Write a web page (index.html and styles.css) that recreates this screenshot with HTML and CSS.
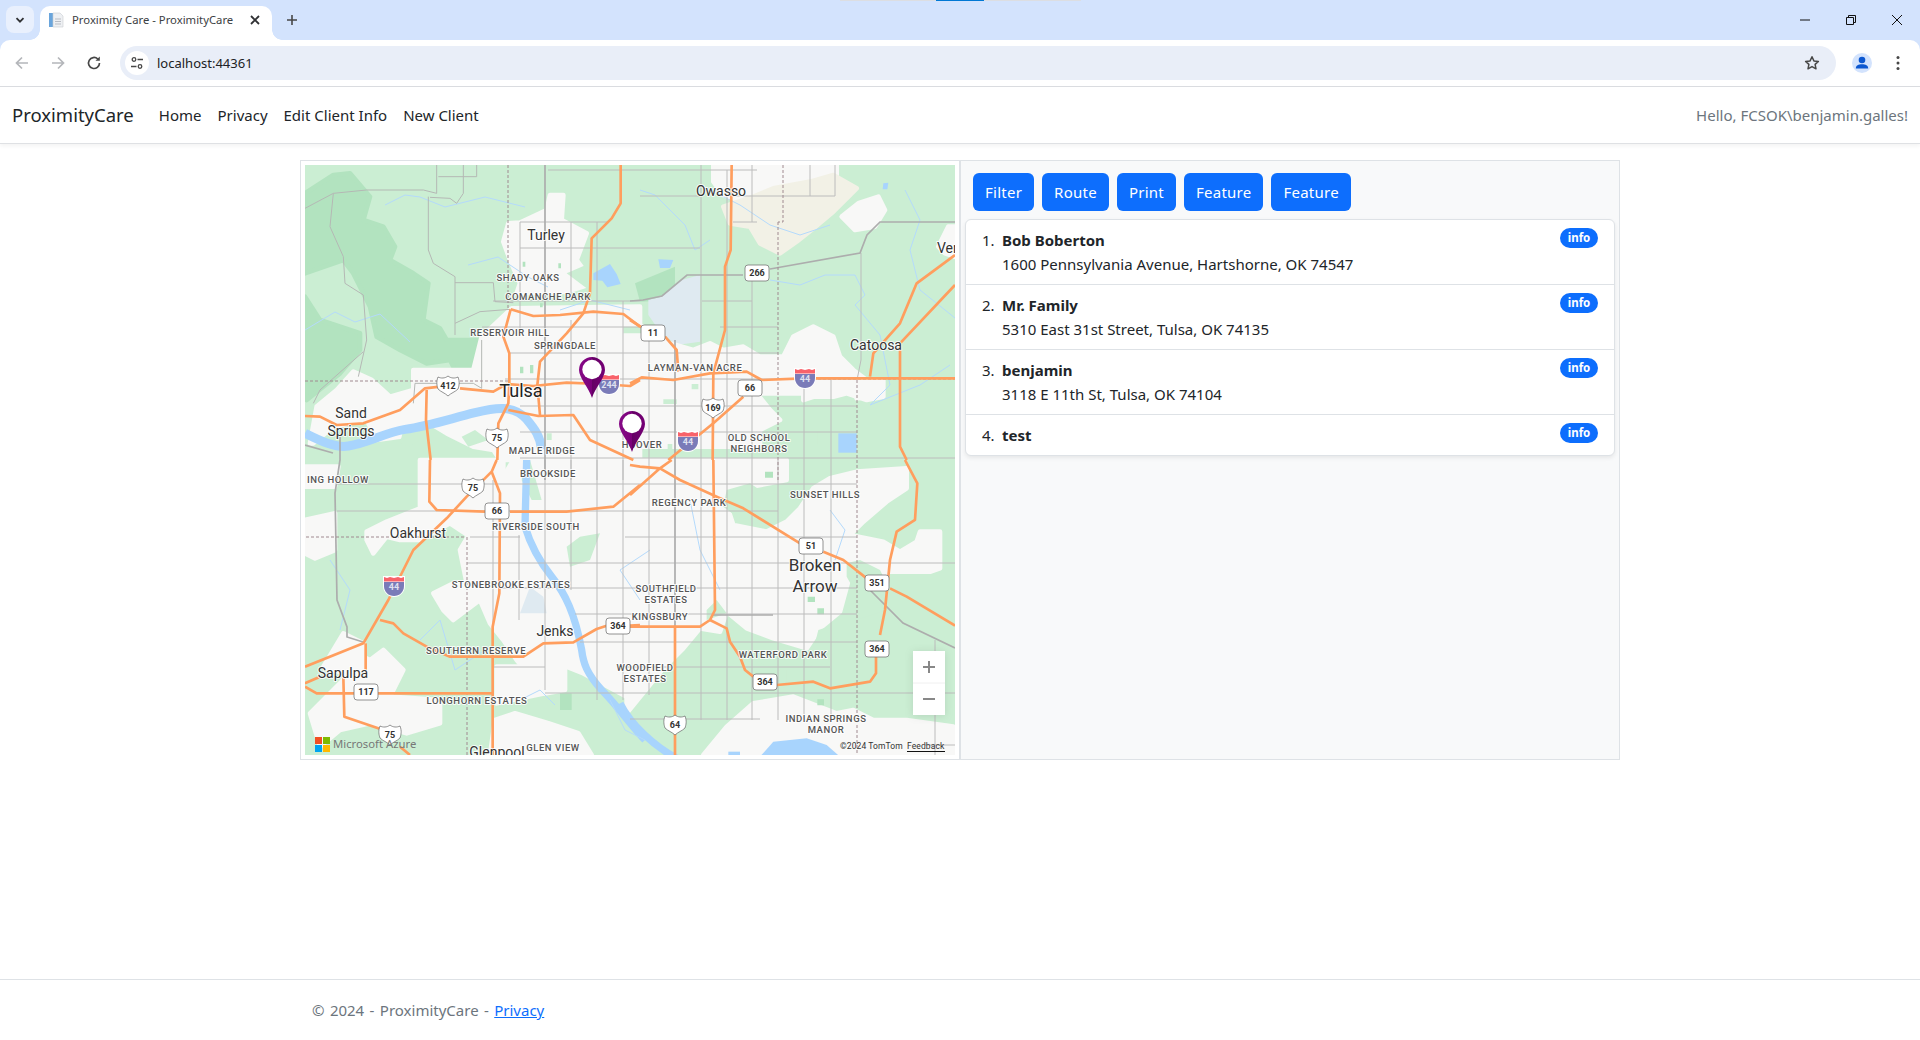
FILE: index.html
```html
<!DOCTYPE html>
<html lang="en">
<head>
<meta charset="utf-8">
<title>Proximity Care - ProximityCare</title>
<link rel="stylesheet" href="styles.css">
</head>
<body>
<header class="chrome">
  <div class="drag-hint"><span class="seg"></span><span class="seg seg-blue"></span><span class="seg seg-last"></span></div>
  <div class="tabstrip">
    <button class="tab-search"><svg width="12" height="12" viewBox="0 0 12 12"><path class="ic-s2" d="M2.5 4.2 6 7.7 9.5 4.2"/></svg></button>
    <div class="tab">
      <svg class="favicon" width="16" height="16" viewBox="0 0 16 16"><rect x="1" y="1" width="4" height="14" fill="#6aa5dc"/><path d="M5 1h7l3 3v11H5z" fill="#eef0f3" stroke="#c9ccd1" stroke-width=".6"/><path d="M7 7h6M7 9.500h6M7 12h6" stroke="#b9bdc4"/></svg>
      <span class="tab-title">Proximity Care - ProximityCare</span>
      <svg class="tab-close" width="10" height="10" viewBox="0 0 10 10"><path class="ic-s2" d="M1 1l8 8M9 1l-8 8"/></svg>
    </div>
    <svg class="newtab" width="12" height="12" viewBox="0 0 12 12"><path class="ic-s" d="M6 1v10M1 6h10"/></svg>
    <div class="winbtns">
      <svg width="12" height="12" viewBox="0 0 12 12"><path class="ic-w" d="M1 6h10"/></svg>
      <svg width="12" height="12" viewBox="0 0 12 12"><path class="ic-w" d="M1.500 3.500h7v7h-7zM3.500 3.500v-2h7v7h-2"/></svg>
      <svg width="12" height="12" viewBox="0 0 12 12"><path class="ic-w" d="M1 1l10 10M11 1L1 11"/></svg>
    </div>
  </div>
  <div class="toolbar">
    <svg class="tb-ic" width="16" height="16" viewBox="0 0 16 16"><path class="ic-dis" d="M14 8H2.500M8 2.500 2.500 8 8 13.500"/></svg>
    <svg class="tb-ic" width="16" height="16" viewBox="0 0 16 16"><path class="ic-dis" d="M2 8h11.500M8 2.500 13.500 8 8 13.500"/></svg>
    <svg class="tb-ic" width="16" height="16" viewBox="0 0 16 16"><path class="ic-rl" d="M13.500 8A5.500 5.500 0 1 1 11.800 4"/><path d="M13.800 1.500v4.300H9.500z" fill="#474747"/></svg>
    <div class="omnibox">
      <span class="site-ic"><svg width="14" height="14" viewBox="0 0 14 14"><circle cx="4" cy="3.500" r="1.800" class="ic-t"/><path class="ic-t" d="M7.500 3.500h5.500M1 10.500h5.500"/><circle cx="10" cy="10.500" r="1.800" class="ic-t"/></svg></span>
      <span class="url">localhost:44361</span>
      <svg class="star" width="16" height="16" viewBox="0 0 16 16"><path class="ic-star" d="M8 1.800l1.900 4.100 4.500.5-3.300 3 .9 4.400L8 11.600l-4 2.200.9-4.400-3.300-3 4.500-.5z"/></svg>
    </div>
    <span class="avatar"><svg width="20" height="20" viewBox="0 0 20 20"><circle cx="10" cy="7" r="3.300" fill="#0b57d0"/><path d="M3.800 15.500c0-3.200 2.600-4.300 6.200-4.300s6.200 1.100 6.200 4.300z" fill="#0b57d0"/></svg></span>
    <svg class="menu" width="16" height="16" viewBox="0 0 16 16"><circle cx="8" cy="2.500" r="1.500" fill="#474747"/><circle cx="8" cy="8" r="1.500" fill="#474747"/><circle cx="8" cy="13.500" r="1.500" fill="#474747"/></svg>
  </div>
</header>

<nav class="navbar">
  <a class="brand">ProximityCare</a>
  <ul class="navlinks">
    <li><a>Home</a></li>
    <li><a>Privacy</a></li>
    <li><a>Edit Client Info</a></li>
    <li><a>New Client</a></li>
  </ul>
  <span class="hello">Hello, FCSOK\benjamin.galles!</span>
</nav>

<main class="container">
  <section class="map-col">
    <svg class="map" width="650" height="590" viewBox="305 165 650 590">
      <rect x="305" y="165" width="650" height="590" class="green"/>
      <!-- fills: top-left -->
      <g transform="translate(300 160) scale(.33333)">
        <path class="forest soft" d="M15 100 100 45l50-5 60 70-20 70 60 20 35 60-15 40 70 40 45 30-15 110 50 25 20 35h100v70l-35 20-35 10-20-40-70 10-80-40-70-40-20-90-50-100-30-40-115 40z"/>
        <path class="forest soft" d="M15 410l45 70 120 40v50l-60 70-100 80z"/>
        <path class="urban soft" d="M625 190l35-2 80-38 10-45h40l-5 75 75 40-30 80 50 70-80 25-150 5 10-30-30-70-20-55z"/>
        <path class="urban soft" d="M545 530l90-85 385-5v460H600l-20-30-60-10-80-40-50-30h-60l-30 40-70 10-30-60-100 20-60 50H30l20-110 60-50 50-55 55 25 55 50 70-20v-60h180z"/>
        <path class="forest" d="M660 620h10v20h-10zM690 615h10v25h-10zM775 310h8v15h-8zM668 305h8v15h-8zM720 430h8v12h-8z"/>
        <path class="green" d="M310 810h40l10 30-30 20-30-10zM485 830l40-20 40 30-60 20zM740 820h15v20h-15z"/>
        <path class="green" d="M965 380l20-60 35 10v100H960zM800 340l70-30 70-30 30 40-90 80z"/>
        <path class="water" d="M880 340l50-28 20 30 12 30-40 10-15-20-27-2z"/>
        <path class="waterln thick" d="M15 820c40 20 90 45 130 38 60-10 110-40 170-50 70-10 130-30 210-50 60-15 115-25 155 20 25 30 40 50 45 90" />
      </g>
      <!-- fills: top-right -->
      <g transform="translate(630 160) scale(.33333)">
        <path class="urban soft" d="M250 15h370v70l-60 20-70 40-80 30-70 0v-50l-60-20-30-40z"/>
        <path class="sand soft" d="M370 110l60-25 110-20 70-20 70 40-30 30-40 40-60 50-50 40-50 35-60-30-30-50-60-10-20-50z"/>
        <path class="urban soft" d="M635 170l50-40 60-20 20 40-30 50-60 10z"/>
        <path class="urban soft" d="M925 260l30-60h20v90l-30-10z"/>
        <path class="forest" d="M15 370l120-50v100l-105 5z"/>
        <path class="lake" d="M55 420l40-10 60-50 55-15v200l-70 10-50-40-35-50z"/>
        <path class="urban soft" d="M-20 500h60l80 50 70 20 50-20 40 20 60-10 50 30h70l30-60 60-30 60 30 20 60 40 40 40 30h50l0 50-50 10-60-20-40 10-60 0-30 10v-20h-140l40 50 30 30-60 30 0 50-490 0z"/>
        <path class="urban soft" d="M680 665h60v40l-60 10z"/>
        <path class="green" d="M-20 500h55v20h-55zM100 718h40v14h-40zM185 672h20v16h-20z"/>
        <path class="waterfill" d="M625 820h55v58h-55z"/>
        <path class="green" d="M562 815h40v40h-40z"/>
        <path class="green" d="M113 852h14v24h-14z"/>
        <path class="water" d="M85 298l45 2-10 24H90zM760 70l15-2-3 20h-14z"/>
      </g>
      <!-- fills: bottom-left -->
      <g transform="translate(300 460) scale(.33333)">
        <path class="urban soft" d="M15 20h100l-10 60h-90zM15 180l90-20v110l-60 25-30-15z"/>
        <path class="urban soft" d="M200 215l60-30 100-40v-145h250v70l-30 70-70 90-60-40-90 50-60 0-40-10-40 50-20-40z"/>
        <path class="urban soft" d="M400 400l60-30 100-10-20 60-80 60-30-30z"/>
        <path class="urban soft" d="M640 0h380v660l-40 50-130-70-100-40-50 60-50-60-40-60-40-50-30-70-40-50-20-100z"/>
        <path class="green" d="M690 0h-15l-10 60 30 60 30 0zM800 260l40-30 60-10-30 80-60 20z"/>
        <path class="urban soft" d="M30 760l100-100 20-90 60 30 40-30 60 60-40 80 150 10 0 70-100 30-110-30-90 20-60 50zM130 520l60 30v50l-60 40-60-20z"/>
        <path class="urban soft" d="M590 620h145v80l-145 30zM585 780l60-20 100 30 90 30 40 65H570z"/>
        <path class="urban soft" d="M735 560l60 30 0 100-60 10z"/>
        <path class="lake" d="M660 460l30-80 40 30 10 50h-80z"/>
        <path class="forest" d="M780 700h35v50h-35z"/>
        <path class="waterln thick2" d="M680 0l-5 200c15 50 40 100 80 150 40 50 70 110 90 220 5 40 15 70 60 120 50 50 90 110 130 150"/>
      </g>
      <!-- fills: bottom-right -->
      <g transform="translate(630 460) scale(.33333)">
        <path class="urban soft" d="M-10 0h480v60l-130 25-50 50 20 60 100 20 60-30 40-40 40-60 50-30 80-20 150-10v60l-60 40-70 60-40 40 100 20 50 30 50-30 10-30h60v110l-30 10-120 0-90 40 30-60-60 30-30 110-60 50-40 60-100-30-80-30-60-50-20 60-60-10-50 60-60 60L-10 760z"/>
        <path class="urban soft" d="M290 800l80-70 120-20 130 50 50-10 60 30 100 0 140 20v85H220z"/>
        <path class="green" d="M290 90l70-20 60 40 40 60-60 30-40-20-40-10-40-30zM230 450l30-30 30 40-60 20zM565 510l30-10 30 40-40 40-30-30zM280 630l30-20 80 0 80 20 0 50-100 20-90-10zM650 310l40-10 60 30 30 60-10 60-90 30 10-60-40-70z"/>
        <path class="forest" d="M405 35h24v18h-24zM533 410h22v16h-22zM562 445h20v18h-20zM562 718h20v18h-20z"/>
        <path class="waterln thick2" d="M-30 730c30 60 100 130 180 170"/>
        <path class="water" d="M390 890l40-45 100-10 60 20 40 35z"/>
        <path class="water" d="M295 875h35v15h-35z"/>
      </g>
      <!-- thin rivers -->
      <g class="rivers">
        <path d="M305 330l30-18 20 10 25-8 30 28M468 265l30-8 30 20 20 10M560 310l30-10 40 10M385 205l20-10 15 2 25 10 40-10 40 10M640 190l15 5 30 30 10 25 15-10M700 185l40 20 30 20 30 10 30-10M770 280l30 5 25-10 30 0 10 20-10 10 25 30 10 50-20 20 50-20 30-20M905 190l15 30-10 30 10 40 50 40M610 700l15 30 20 10M640 600l-20-30 30-20M830 510l15 20-10 30M520 700l20-10 15 15M330 560l20 30-10 40M420 640l20-20 15 50 30-20M690 500l10 50 20 40"/>
      </g>
      <!-- roads -->
      <path class="grid" d="M548 170H757M640 196h60M733 196H835M520 222h87M733 222h24M520 248H700M493 301H640M702 301h50M482 327H640M720 327h58M510 353H778M505 379H857M520 406H857M520 432H857M520 458H955M337 484H857M337 511H778M470 537h50M625 537H857M467 563H955M500 588H857M575 614H857M580 642H857M493 667h52M625 667H830M545 693H955M630 719H760M925 745h30"/>
      <path class="grid" d="M520 222V335M571 222V301M571 320V480M597 222V480M623 301V480M649 340V695M701 165V720M727 170V720M752 165V222M752 275V720M804 385V720M831 380V720M493 480V700M519 535V620M545 460V690M571 460V590M597 460V700M623 460V700M778 460V720M935 640V755M835 165V196M810 165V196M861 253V360l-4 20"/>
      <g transform="translate(300 160) scale(.33333)">
        <path class="rural" d="M15 145l85-45 100-10h170l40 10V15M530 15v35H415M385 110v160l15 40 65 40v175M465 368h115l5 57 55 3M465 490l75-35 90-7M100 100l-10 100 40 90 5 80 55 35 10 135-25 110M40 730l20-40 130-115M340 730l5-60h175l25 15V540M390 112l60 3 20 15 20-30V15"/>
      </g>
      <path class="grid-thick" d="M545 165V340M545 340V480M675 340V645M630 301l13-1 19-4 25-21h56M770 269l90-16 7-18 13-13h75M870 590l33 33 52 25M340 437v23l-5 33 2 107 10 27v10l16 5M305 445l28 8M713 615h60"/>
      <path class="county" d="M508 165V310M305 381H508M783 165v57h-5M778 222V480M778 379H955M857 380V755M306 537h160M467 537V755"/>
      <g transform="translate(300 160) scale(.33333)">
        <g class="o"><path d="M962 15v115l-27 45-60 60-5 165-20 60-50 60-80 85-8 70 8 90"/><path d="M632 448l-22 82 18 50v90"/><path d="M632 448l68 20 80-3 100-10 90 7 50 38"/><path d="M15 768l45 2 50 25 80-5 110-40 75-65 45-5M480 685l100 10 40-23 80 6 100-10 100 4 90 6 30-18"/><path d="M380 690l-2 90 14 120"/><path d="M625 750l90 18 105-3 50 75 130 60"/><path d="M628 670l-3 60-30 60-3 110"/></g>
      </g>
      <g transform="translate(630 160) scale(.33333)">
        <g class="o"><path d="M305 15l-3 255-17 50v190l-35 130-2 260"/><path d="M0 670l35-18 95 8 110-20 110-5 45 25 125-5h460"/><path d="M0 480l40 25M105 530l35 40 5 65"/><path d="M250 790l90-80M115 900l135-110"/><path d="M975 285 860 370l-50 120-80 90-10 70"/><path d="M975 375 810 550v310l20 40"/></g>
      </g>
      <g transform="translate(300 460) scale(.33333)">
        <g class="o"><path d="M390 0l-2 125 22 25 145 5M630 155l170 0 140-15 80-65"/><path d="M590 0l-15 35-75 75-60 65-100 95-75 150-75 130-175 70"/><path d="M575 35l25 65-2 300-20 100v385"/><path d="M240 480l40 10 30 30 70 40 70 30h220l60-40 90-3 70-40 30-10M990 497l30-2"/><path d="M197 550v80"/><path d="M15 680l35 20h530"/><path d="M15 670l45-20"/><path d="M130 650l3 120 117 40M300 860l30 25"/></g>
      </g>
      <g transform="translate(630 460) scale(.33333)">
        <g class="o"><path d="M0 105l90-80 35-25M0 15l30 5 60 5 60 35 120 55 70 30 170 105M580 275l60 25 70 55M780 385l50 25 145 87"/><path d="M250 0l5 450-15 30-30 20H0"/><path d="M240 480l50 25 10 40 30 45 15 40 25 20"/><path d="M440 675l110-10 50 20 120-20 18-25v-50M750 525l15-75 15-150 20-85 55-35 7-110-37-70"/><path d="M135 497v388"/></g>
      </g>

      <!-- labels -->
      <g class="labels">
        <text class="city" x="546" y="240">Turley</text>
        <text class="city" x="721" y="196">Owasso</text>
        <text class="city" x="937" y="253" style="text-anchor:start">Ver</text>
        <text class="city" x="876" y="350">Catoosa</text>
        <text class="city" x="351" y="418">Sand</text>
        <text class="city" x="351" y="436">Springs</text>
        <text class="city big" x="521" y="397">Tulsa</text>
        <text class="city" x="418" y="538">Oakhurst</text>
        <text class="city" x="555" y="636">Jenks</text>
        <text class="city" x="343" y="678">Sapulpa</text>
        <text class="city" x="497" y="757">Glenpool</text>
        <text class="city bigger" x="815" y="571">Broken</text>
        <text class="city bigger" x="815" y="592">Arrow</text>
        <text class="hood" x="528" y="281">SHADY OAKS</text>
        <text class="hood" x="548" y="300">COMANCHE PARK</text>
        <text class="hood" x="510" y="336">RESERVOIR HILL</text>
        <text class="hood" x="565" y="349">SPRINGDALE</text>
        <text class="hood" x="695" y="371">LAYMAN-VAN ACRE</text>
        <text class="hood" x="542" y="454">MAPLE RIDGE</text>
        <text class="hood" x="548" y="477">BROOKSIDE</text>
        <text class="hood" x="642" y="448">HOOVER</text>
        <text class="hood" x="759" y="441">OLD SCHOOL</text>
        <text class="hood" x="759" y="452">NEIGHBORS</text>
        <text class="hood" x="338" y="483">ING HOLLOW</text>
        <text class="hood" x="536" y="530">RIVERSIDE SOUTH</text>
        <text class="hood" x="689" y="506">REGENCY PARK</text>
        <text class="hood" x="825" y="498">SUNSET HILLS</text>
        <text class="hood" x="511" y="588">STONEBROOKE ESTATES</text>
        <text class="hood" x="666" y="592">SOUTHFIELD</text>
        <text class="hood" x="666" y="603">ESTATES</text>
        <text class="hood" x="660" y="620">KINGSBURY</text>
        <text class="hood" x="476" y="654">SOUTHERN RESERVE</text>
        <text class="hood" x="783" y="658">WATERFORD PARK</text>
        <text class="hood" x="645" y="671">WOODFIELD</text>
        <text class="hood" x="645" y="682">ESTATES</text>
        <text class="hood" x="477" y="704">LONGHORN ESTATES</text>
        <text class="hood" x="826" y="722">INDIAN SPRINGS</text>
        <text class="hood" x="826" y="733">MANOR</text>
        <text class="hood" x="553" y="751">GLEN VIEW</text>
      </g>

      <!-- shields -->
      <g class="shields">
        <g transform="translate(448 386)"><path class="us" d="M-10-9c3 1.500 7 1.500 10-1 3 2.500 7 2.500 10 1 2 5 1 9 0 12-3 3-7 4-10 7-3-3-7-4-10-7-1-3-2-7 0-12z"/><text y="3">412</text></g>
        <g transform="translate(497 438)"><path class="us" d="M-10-9c3 1.500 7 1.500 10-1 3 2.500 7 2.500 10 1 2 5 1 9 0 12-3 3-7 4-10 7-3-3-7-4-10-7-1-3-2-7 0-12z"/><text y="3">75</text></g>
        <g transform="translate(473 488)"><path class="us" d="M-10-9c3 1.500 7 1.500 10-1 3 2.500 7 2.500 10 1 2 5 1 9 0 12-3 3-7 4-10 7-3-3-7-4-10-7-1-3-2-7 0-12z"/><text y="3">75</text></g>
        <g transform="translate(390 735)"><path class="us" d="M-10-9c3 1.500 7 1.500 10-1 3 2.500 7 2.500 10 1 2 5 1 9 0 12-3 3-7 4-10 7-3-3-7-4-10-7-1-3-2-7 0-12z"/><text y="3">75</text></g>
        <g transform="translate(713 408)"><path class="us" d="M-10-9c3 1.500 7 1.500 10-1 3 2.500 7 2.500 10 1 2 5 1 9 0 12-3 3-7 4-10 7-3-3-7-4-10-7-1-3-2-7 0-12z"/><text y="3">169</text></g>
        <g transform="translate(675 725)"><path class="us" d="M-10-9c3 1.500 7 1.500 10-1 3 2.500 7 2.500 10 1 2 5 1 9 0 12-3 3-7 4-10 7-3-3-7-4-10-7-1-3-2-7 0-12z"/><text y="3">64</text></g>
        <g transform="translate(757 273)"><rect class="st" x="-12" y="-8" width="24" height="16" rx="3"/><text y="3">266</text></g>
        <g transform="translate(653 333)"><rect class="st" x="-12" y="-8" width="24" height="16" rx="3"/><text y="3">11</text></g>
        <g transform="translate(750 388)"><rect class="st" x="-12" y="-8" width="24" height="16" rx="3"/><text y="3">66</text></g>
        <g transform="translate(497 511)"><rect class="st" x="-12" y="-8" width="24" height="16" rx="3"/><text y="3">66</text></g>
        <g transform="translate(618 626)"><rect class="st" x="-12" y="-8" width="24" height="16" rx="3"/><text y="3">364</text></g>
        <g transform="translate(765 682)"><rect class="st" x="-12" y="-8" width="24" height="16" rx="3"/><text y="3">364</text></g>
        <g transform="translate(877 649)"><rect class="st" x="-12" y="-8" width="24" height="16" rx="3"/><text y="3">364</text></g>
        <g transform="translate(811 546)"><rect class="st" x="-12" y="-8" width="24" height="16" rx="3"/><text y="3">51</text></g>
        <g transform="translate(877 583)"><rect class="st" x="-12" y="-8" width="24" height="16" rx="3"/><text y="3">351</text></g>
        <g transform="translate(366 692)"><rect class="st" x="-12" y="-8" width="24" height="16" rx="3"/><text y="3">117</text></g>
        <g transform="translate(609 384)"><path class="i-w" d="M-11-10h22v10c0 6-5 11-11 11s-11-5-11-11z"/><path class="i-b" d="M-10-4h20v4c0 6-4.500 10-10 10s-10-4-10-10z"/><path class="i-r" d="M-10-9l3 1 3-1 4 1 4-1 3 1 3-1v4.500h-20z"/><text class="itext" y="4">244</text></g>
        <g transform="translate(805 378)"><path class="i-w" d="M-11-10h22v10c0 6-5 11-11 11s-11-5-11-11z"/><path class="i-b" d="M-10-4h20v4c0 6-4.500 10-10 10s-10-4-10-10z"/><path class="i-r" d="M-10-9l3 1 3-1 4 1 4-1 3 1 3-1v4.500h-20z"/><text class="itext" y="4">44</text></g>
        <g transform="translate(688 441)"><path class="i-w" d="M-11-10h22v10c0 6-5 11-11 11s-11-5-11-11z"/><path class="i-b" d="M-10-4h20v4c0 6-4.500 10-10 10s-10-4-10-10z"/><path class="i-r" d="M-10-9l3 1 3-1 4 1 4-1 3 1 3-1v4.500h-20z"/><text class="itext" y="4">44</text></g>
        <g transform="translate(394 586)"><path class="i-w" d="M-11-10h22v10c0 6-5 11-11 11s-11-5-11-11z"/><path class="i-b" d="M-10-4h20v4c0 6-4.500 10-10 10s-10-4-10-10z"/><path class="i-r" d="M-10-9l3 1 3-1 4 1 4-1 3 1 3-1v4.500h-20z"/><text class="itext" y="4">44</text></g>
      </g>

      <!-- pins -->
      <defs><linearGradient id="pinfill" x1="0" x2="1" y1="0" y2="0"><stop offset="0" stop-color="#860a86"/><stop offset=".5" stop-color="#7a007a"/><stop offset=".5" stop-color="#640064"/><stop offset="1" stop-color="#760076"/></linearGradient></defs>
      <g transform="translate(592 370)"><path fill="url(#pinfill)" d="M0 28C-3 18-13 8-13 0A13 13 0 1 1 13 0C13 8 3 18 0 28z"/><circle cy="-.5" r="9.700" fill="#fff"/></g>
      <g transform="translate(632 424)"><path fill="url(#pinfill)" d="M0 28C-3 18-13 8-13 0A13 13 0 1 1 13 0C13 8 3 18 0 28z"/><circle cy="-.5" r="9.700" fill="#fff"/></g>

      <!-- attribution -->
      <g>
        <rect x="315" y="737" width="7" height="7" fill="#f25022"/><rect x="323" y="737" width="7" height="7" fill="#7fba00"/><rect x="315" y="745" width="7" height="7" fill="#00a4ef"/><rect x="323" y="745" width="7" height="7" fill="#ffb900"/>
        <text class="ms" x="333" y="748">Microsoft Azure</text>
        <text class="attr" x="840" y="749">©2024 TomTom</text>
        <text class="attr" x="907" y="749">Feedback</text>
        <path d="M907 751.500h38" stroke="#111" fill="none"/>
      </g>
      <!-- zoom control -->
      <g>
        <rect class="zoomctl" x="913" y="651" width="32" height="64"/>
        <path class="zoomline" d="M913 683h32"/>
        <path class="zoomsym" d="M929 661v12M923 667h12M923 699h12"/>
      </g>
    </svg>
  </section>
  <section class="list-col">
    <div class="btnrow">
      <button class="btn">Filter</button>
      <button class="btn">Route</button>
      <button class="btn">Print</button>
      <button class="btn">Feature</button>
      <button class="btn">Feature</button>
    </div>
    <ol class="clients">
      <li class="client"><span class="num">1.</span><div class="body"><div class="name">Bob Boberton</div><div>1600 Pennsylvania Avenue, Hartshorne, OK 74547</div></div><span class="badge">info</span></li>
      <li class="client"><span class="num">2.</span><div class="body"><div class="name">Mr. Family</div><div>5310 East 31st Street, Tulsa, OK 74135</div></div><span class="badge">info</span></li>
      <li class="client"><span class="num">3.</span><div class="body"><div class="name">benjamin</div><div>3118 E 11th St, Tulsa, OK 74104</div></div><span class="badge">info</span></li>
      <li class="client"><span class="num">4.</span><div class="body"><div class="name">test</div></div><span class="badge">info</span></li>
    </ol>
  </section>
</main>

<footer class="footer">
  <div class="footer-inner">© 2024 - ProximityCare - <a class="flink">Privacy</a></div>
</footer>
</body>
</html>
```
FILE: styles.css
```css
* { box-sizing: border-box; }
html, body { margin: 0; height: 100%; }
body { width: 1920px; height: 1040px; overflow: hidden; position: relative; background: #fff; color: #212529; font-family: "Noto Sans", "Open Sans", sans-serif; font-size: 15px; line-height: 24px; display: flex; flex-direction: column; }
a { text-decoration: none; color: inherit; }
ul, ol { list-style: none; margin: 0; padding: 0; }
button { font: inherit; border: 0; }

.chrome { flex: none; background: #d3e3fd; position: relative; }
.drag-hint { position: absolute; top: 0; left: 840px; display: flex; height: 1px; }
.seg { width: 96px; background: #dcdee2; }
.seg-blue { width: 48px; background: #0078d4; }
.seg-last { width: 97px; }
.tabstrip { height: 40px; display: flex; align-items: flex-start; padding: 6px 0 0 6px; }
.tab-search { width: 28px; height: 27px; border-radius: 8px; background: #e9f0fd; display: flex; align-items: center; justify-content: center; padding: 0; }
.tab { width: 232px; height: 34px; margin-left: 6px; background: #fff; border-radius: 10px 10px 0 0; display: flex; align-items: center; padding: 0 0 6px 8px; position: relative; }
.tab::before, .tab::after { content: ""; position: absolute; bottom: 0; width: 10px; height: 10px; }
.tab::before { left: -10px; background: radial-gradient(circle at 0 0, transparent 9.5px, #fff 10px); }
.tab::after { right: -10px; background: radial-gradient(circle at 100% 0, transparent 9.5px, #fff 10px); }
.favicon { flex: none; }
.tab-title { margin-left: 8px; font-size: 11.300px; line-height: 16px; color: #3c4043; white-space: nowrap; width: 167px; }
.tab-close { margin-left: 11px; }
.newtab { margin: 8px 0 0 14px; }
.winbtns { margin-left: auto; display: flex; gap: 34px; padding: 8px 17px 0 0; }
.ic-s { stroke: #474747; stroke-width: 1.6; fill: none; }
.ic-s2 { stroke: #303134; stroke-width: 1.8; fill: none; }
.ic-w { stroke: #111; stroke-width: 1; fill: none; }
.ic-dis { stroke: #b4b6ba; stroke-width: 1.7; fill: none; }
.ic-rl { stroke: #474747; stroke-width: 1.7; fill: none; }
.ic-t { stroke: #474747; stroke-width: 1.3; fill: none; }
.ic-star { stroke: #474747; stroke-width: 1.5; fill: none; stroke-linejoin: round; }

.toolbar { height: 47px; background: #fff; border-radius: 10px 10px 0 0; border-bottom: 1px solid #dadce0; display: flex; align-items: center; padding: 0 14px 1px 14px; position: relative; }
.tb-ic { margin-right: 20px; flex: none; }
.omnibox { flex: 1; height: 34px; margin-left: -2px; background: #e9eef8; border-radius: 17px; display: flex; align-items: center; padding: 0 16px 0 5px; }
.site-ic { width: 24px; height: 24px; border-radius: 50%; background: #fff; display: flex; align-items: center; justify-content: center; }
.url { margin-left: 8px; font-size: 13px; line-height: 18px; color: #202124; }
.star { margin-left: auto; }
.avatar { width: 20px; height: 20px; border-radius: 50%; background: #d3e3fd; margin-left: 16px; flex: none; display: block; line-height: 0; }
.menu { margin-left: 18px; flex: none; }

.navbar { flex: none; height: 57px; border-bottom: 1px solid #dfe1e4; box-shadow: 0 2px 4px rgba(0,0,0,.05); display: flex; align-items: center; padding: 0 12px; }
.brand { font-size: 18.500px; line-height: 30px; color: #212529; margin-right: 17px; }
.navlinks { display: flex; }
.navlinks a { display: block; padding: 8px; color: #212529; }
.hello { margin-left: auto; color: #6c757d; }

.container { flex: none; width: 1320px; height: 600px; margin: 16px 0 0 300px; display: flex; }
.map-col { width: 660px; height: 600px; border: 1px solid #dee2e6; padding: 4px; }
.map { display: block; }
.list-col { width: 660px; height: 600px; border: 1px solid #dee2e6; border-left-width: 1px; padding: 4px; background: #f8f9fa; }
.btnrow { display: flex; gap: 8px; padding: 8px; }
.btn { height: 38px; padding: 6px 12px; border-radius: 6px; background: #0d6efd; color: #fff; line-height: 24px; letter-spacing: .25px; }
.clients { background: #fff; border: 1px solid #dee2e6; border-radius: 6px; box-shadow: 0 2px 4px rgba(0,0,0,.075); margin: 0; }
.client { display: flex; align-items: flex-start; padding: 8px 16px; border-top: 1px solid #dee2e6; }
.client:first-child { border-top: 0; }
.num { width: 20px; flex: none; }
.body { flex: 1; }
.name { font-weight: 700; }
.badge { width: 38px; height: 20px; border-radius: 10px; background: #0d6efd; color: #fff; font-size: 11.500px; font-weight: 700; line-height: 19px; text-align: center; flex: none; }

.footer { position: absolute; left: 0; right: 0; bottom: 0; height: 61px; border-top: 1px solid #dee2e6; color: #6c757d; line-height: 60px; }
.footer-inner { margin-left: 312px; word-spacing: 1.500px; }
.flink { color: #0d6efd; text-decoration: underline; }

/* map */
.green { fill: #cbeed3; }
.forest { fill: #b2e3bf; }
.urban { fill: #f8f8f7; }
.sand { fill: #f2f1e6; }
.lake { fill: #dfeaf1; }
.soft { stroke-width: 14; stroke-linejoin: round; }
.forest.soft { stroke: #b2e3bf; }
.urban.soft { stroke: #f8f8f7; }
.sand.soft { stroke: #f2f1e6; }
.water, .waterfill { fill: #a8d4fd; }
.waterln { fill: none; stroke: #a8d4fd; stroke-linejoin: round; }
.thick { stroke-width: 27; }
.thick2 { stroke-width: 22; }
.rivers path { fill: none; stroke: #b4dafc; stroke-width: 1; }
.grid { fill: none; stroke: #bcbcbc; stroke-width: 1; }
.rural { fill: none; stroke: #b5b8b5; stroke-width: 3; stroke-linejoin: round; }
.grid-thick { fill: none; stroke: #adadad; stroke-width: 1.700; }
.county { fill: none; stroke: #a08a90; stroke-width: 1; stroke-dasharray: 3 2; }
.o path { fill: none; stroke: #ff9e5e; stroke-width: 8; stroke-linejoin: round; }
.labels text { font-family: Roboto, sans-serif; text-anchor: middle; paint-order: stroke; stroke: rgba(255,255,255,.85); stroke-width: 2px; stroke-linejoin: round; }
.city { font-size: 14px; fill: #333; }
.labels .big { font-size: 18px; fill: #222; }
.bigger { font-size: 17px; fill: #333; }
.hood { font-size: 9.500px; fill: #555; letter-spacing: .55px; font-weight: 500; }
.shields text { font-family: Roboto, sans-serif; font-size: 9px; font-weight: 700; fill: #333; text-anchor: middle; }
.shields .itext { fill: #dfe1f0; }
.us { fill: #fff; stroke: #666; stroke-width: .7; }
.st { fill: #fff; stroke: #777; stroke-width: .8; }
.i-w { fill: #fff; }
.i-b { fill: #7a7bb8; }
.i-r { fill: #f8626a; }
.ms { font-family: "Noto Sans", sans-serif; font-size: 11.300px; fill: #777; }
.attr { font-family: Roboto, sans-serif; font-size: 8.500px; fill: #333; letter-spacing: .1px; }
.zoomctl { fill: #fff; filter: drop-shadow(0 1px 4px rgba(0,0,0,.1)); }
.zoomline { stroke: #f0f0f0; fill: none; }
.zoomsym { stroke: #888; stroke-width: 2; fill: none; }
```
